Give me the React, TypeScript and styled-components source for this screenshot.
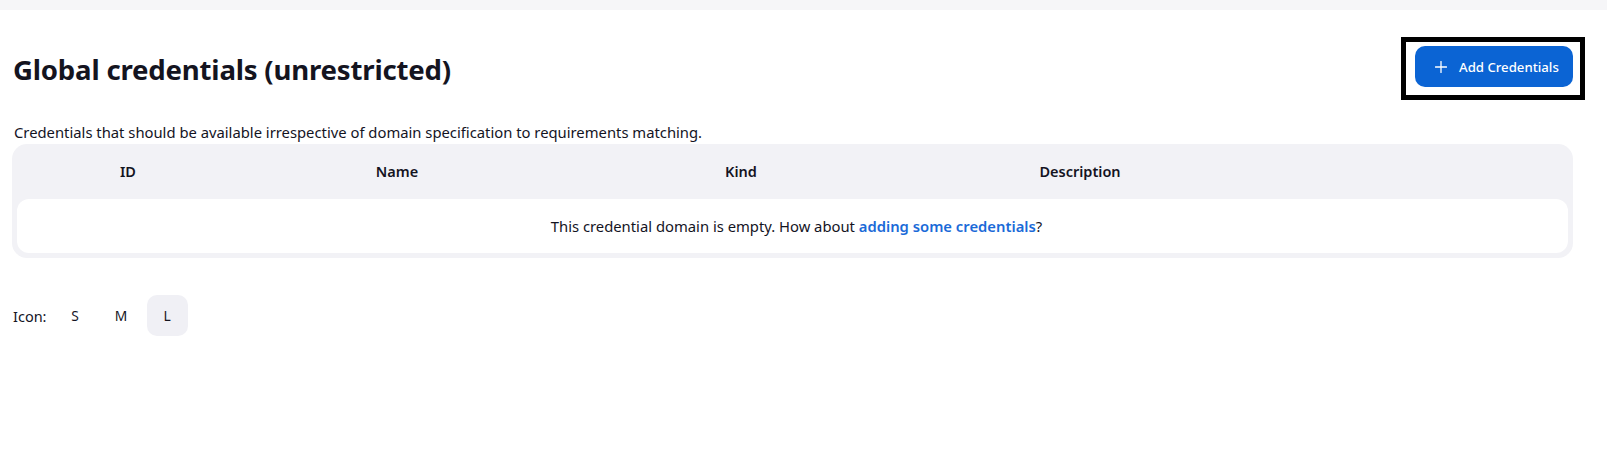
import React from "react";
import styled, { createGlobalStyle } from "styled-components";

const GlobalStyle = createGlobalStyle`
  html, body { margin: 0; padding: 0; background: #ffffff; }
  body {
    font-family: "Noto Sans", "Open Sans", "Liberation Sans", sans-serif;
    color: #14141f;
  }
  * { box-sizing: border-box; }
`;

const TopBar = styled.div`
  height: 10px;
  background: #f6f6f8;
`;

const Main = styled.main`
  padding: 27px 34px 40px 12px;
  display: flex;
  flex-direction: column;
`;

const HeaderRow = styled.div`
  display: flex;
  align-items: center;
  justify-content: space-between;
`;

const Title = styled.h1`
  margin: 0 0 0 1px;
  font-size: 27.6px;
  font-weight: 700;
  letter-spacing: -0.2px;
  line-height: 40px;
`;

const FocusRing = styled.div`
  border: 5px solid #000;
  padding: 4px 7px 8px 9px;
  margin-right: -12px;
`;

const PrimaryButton = styled.button`
  display: flex;
  align-items: center;
  gap: 12px;
  height: 41px;
  width: 158px;
  padding: 0 0 0 20px;
  border: none;
  border-radius: 10px;
  background: #0b64d4;
  color: #fff;
  font-family: inherit;
  font-size: 13.2px;
  font-weight: 500;
  cursor: pointer;
`;

const Description = styled.p`
  margin: 22px 0 0 2px;
  font-size: 14.8px;
  line-height: 20px;
`;

const TableCard = styled.div`
  margin-top: 2px;
  background: #f2f2f6;
  border-radius: 15px;
  padding: 0 5px 5px;
`;

const Columns = `
  display: grid;
  grid-template-columns: 222px 316px 372px 306px 1fr;
`;

const HeadRow = styled.div`
  ${Columns}
  height: 55px;
  align-items: center;
  padding-bottom: 2px;
`;

const HeadCell = styled.div`
  text-align: center;
  font-size: 14.5px;
  font-weight: 600;
`;

const EmptyRow = styled.div`
  height: 54px;
  padding-left: 8px;
  background: #fff;
  border-radius: 12px;
  display: flex;
  align-items: center;
  justify-content: center;
  font-size: 14.8px;
`;

const Link = styled.a`
  color: #1a6ad8;
  font-weight: 600;
  text-decoration: none;
`;

const IconRow = styled.div`
  margin-top: 37px;
  display: flex;
  align-items: center;
  gap: 5px;
  font-size: 14.5px;
`;

const IconLabel = styled.span`
  margin: 0 3px 0 1px;
`;

const SizeButton = styled.button<{ $active?: boolean }>`
  width: 41px;
  height: 41px;
  border: none;
  border-radius: 10px;
  background: ${(p) => (p.$active ? "#f0f0f5" : "transparent")};
  color: #14141f;
  font-family: inherit;
  font-size: 13.8px;
  cursor: pointer;
`;

const PlusIcon = () => (
  <svg width="12" height="12" viewBox="0 0 12 12" fill="none">
    <path d="M6 0.5V11.5M0.5 6H11.5" stroke="#fff" strokeWidth="1.3" strokeLinecap="round" />
  </svg>
);

export default function App() {
  return (
    <>
      <GlobalStyle />
      <TopBar />
      <Main>
        <HeaderRow>
          <Title>Global credentials (unrestricted)</Title>
          <FocusRing>
            <PrimaryButton>
              <PlusIcon />
              Add Credentials
            </PrimaryButton>
          </FocusRing>
        </HeaderRow>
        <Description>
          Credentials that should be available irrespective of domain specification to requirements matching.
        </Description>
        <TableCard>
          <HeadRow>
            <HeadCell>ID</HeadCell>
            <HeadCell>Name</HeadCell>
            <HeadCell>Kind</HeadCell>
            <HeadCell>Description</HeadCell>
            <HeadCell />
          </HeadRow>
          <EmptyRow>
            <span>
              This credential domain is empty. How about <Link href="#">adding some credentials</Link>?
            </span>
          </EmptyRow>
        </TableCard>
        <IconRow>
          <IconLabel>Icon:</IconLabel>
          <SizeButton>S</SizeButton>
          <SizeButton>M</SizeButton>
          <SizeButton $active>L</SizeButton>
        </IconRow>
      </Main>
    </>
  );
}
